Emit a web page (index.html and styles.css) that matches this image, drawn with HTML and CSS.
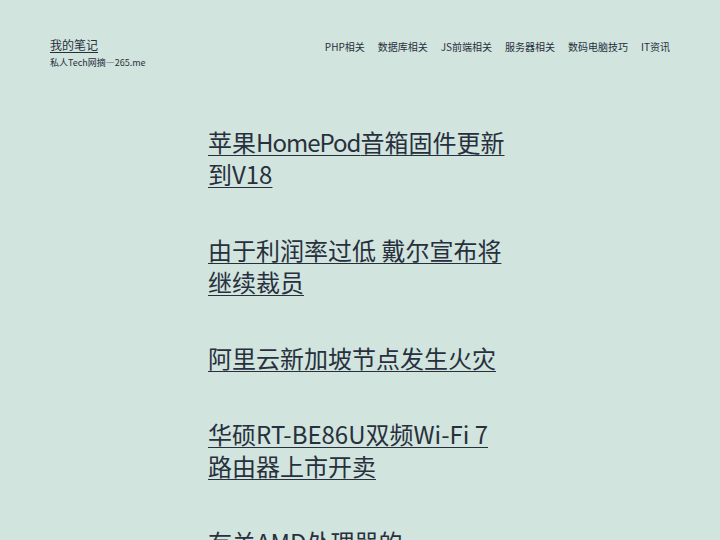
FILE: index.html
```html
<!DOCTYPE html>
<html lang="zh-CN">
<head>
<meta charset="utf-8">
<title>我的笔记</title>
<link rel="stylesheet" href="styles.css">
</head>
<body>
<header class="site-header">
  <div class="branding">
    <a class="site-title" href="#">我的笔记</a>
    <p class="site-desc">私人Tech网摘—265.me</p>
  </div>
  <nav class="menu">
    <a href="#">PHP相关</a>
    <a href="#">数据库相关</a>
    <a href="#">JS前端相关</a>
    <a href="#">服务器相关</a>
    <a href="#">数码电脑技巧</a>
    <a href="#">IT资讯</a>
  </nav>
</header>
<main class="posts">
  <h2 class="post-title"><a href="#">苹果<span class="tight">HomePod</span>音箱固件更新到V18</a></h2>
  <h2 class="post-title"><a href="#">由于利润率过低 戴尔宣布将继续裁员</a></h2>
  <h2 class="post-title"><a href="#">阿里云新加坡节点发生火灾</a></h2>
  <h2 class="post-title"><a href="#">华硕RT-BE86U双频Wi-Fi 7路由器上市开卖</a></h2>
  <h2 class="post-title"><a href="#">有关AMD处理器的</a></h2>
</main>
</body>
</html>
```
FILE: styles.css
```css
html, body {
  margin: 0;
  padding: 0;
}
body {
  background: #d1e4dd;
  color: #28303d;
  font-family: "Noto Sans CJK SC", "Noto Sans", sans-serif;
  width: 720px;
  height: 540px;
  overflow: hidden;
}
a {
  color: #28303d;
}
.site-header {
  display: flex;
  justify-content: space-between;
  align-items: flex-start;
  padding: 36px 50px 0 50px;
  height: 34px;
}
.site-title {
  display: block;
  font-size: 12px;
  line-height: 18px;
  text-decoration: underline;
  text-decoration-thickness: 1px;
  text-underline-offset: 2px;
}
.site-desc {
  margin: 2px 0 0 0;
  font-size: 9px;
  line-height: 14px;
}
.menu {
  display: flex;
  gap: 13px;
  padding-top: 2px;
}
.menu a {
  font-size: 10px;
  line-height: 18px;
  text-decoration: none;
}
.posts {
  width: 304px;
  margin: 56px auto 0 auto;
}
.post-title {
  margin: 0 0 44px 0;
  font-size: 24px;
  line-height: 32px;
  font-weight: 400;
}
.post-title a {
  text-decoration: underline;
  text-decoration-thickness: 1px;
  text-underline-offset: 3px;
}
.tight {
  letter-spacing: -1px;
}
```
